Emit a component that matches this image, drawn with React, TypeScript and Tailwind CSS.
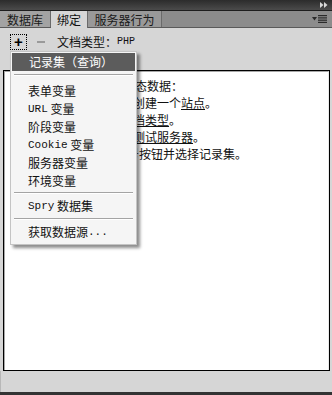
import React from "react";

const CJK = '"Noto Sans CJK SC", "Noto Sans", sans-serif';

function Mono({ children, big }: { children: React.ReactNode; big?: boolean }) {
  return (
    <span className={big ? "text-[11px] font-['Liberation_Mono',monospace]" : "text-[10px] font-['Liberation_Mono',monospace]"}>
      {children}
    </span>
  );
}

function Sep() {
  return <div className="mx-[2px] h-[2px] border-t border-[#a4a4a4] border-b border-b-white" />;
}

function Item({ children }: { children: React.ReactNode }) {
  return <div className="h-[18px] flex items-center pl-[16px] text-[12px] text-[#111] leading-none">{children}</div>;
}

export default function App() {
  return (
    <div
      className="w-[332px] h-[395px] bg-[#d6d6d6] relative overflow-hidden flex flex-col"
      style={{ fontFamily: CJK }}
    >
      {/* top dark bar */}
      <div className="h-[11px] bg-gradient-to-b from-[#2c2c2c] to-[#4b4b4b] flex items-center justify-end pr-[4px] border-b border-[#1e1e1e]">
        <svg width="8" height="6" viewBox="0 0 8 6">
          <polygon points="0,0 3.5,3 0,6" fill="#d8d8d8" />
          <polygon points="4,0 7.5,3 4,6" fill="#d8d8d8" />
        </svg>
      </div>
      {/* tab strip */}
      <div className="h-[17px] bg-[#8c8c8c] flex items-stretch border-b border-[#5a5a5a] relative">
        <div className="w-[51px] bg-[#a3a3a3] border-r border-[#6a6a6a] flex items-center justify-center text-[12px] text-[#1a1a1a] leading-none pt-[1px]">
          数据库
        </div>
        <div className="w-[37px] bg-[#d6d6d6] -mb-[1px] border-r border-[#6a6a6a] flex items-center justify-center text-[12px] text-[#111] leading-none pt-[1px]">
          绑定
        </div>
        <div className="w-[74px] bg-[#999999] border-r border-[#6a6a6a] flex items-center justify-center text-[12px] text-[#1a1a1a] leading-none pt-[1px]">
          服务器行为
        </div>
        <div className="flex-1 flex items-center justify-end pr-[5px] gap-[1px]">
          <svg width="5" height="4" viewBox="0 0 5 4">
            <polygon points="0,0 5,0 2.5,3.5" fill="#2a2a2a" />
          </svg>
          <svg width="9" height="8" viewBox="0 0 9 8">
            <rect x="0" y="0" width="9" height="1.2" fill="#2a2a2a" />
            <rect x="0" y="2.3" width="9" height="1.2" fill="#2a2a2a" />
            <rect x="0" y="4.6" width="9" height="1.2" fill="#2a2a2a" />
            <rect x="0" y="6.8" width="9" height="1.2" fill="#2a2a2a" />
          </svg>
        </div>
      </div>
      {/* toolbar */}
      <div className="h-[42px] pt-[6px] pl-[10px] flex items-start">
        <div className="w-[17px] h-[16px] border border-dotted border-black flex items-center justify-center">
          <span className="text-[15px] font-bold leading-none text-black -mt-[1px] font-['Liberation_Sans',sans-serif]">+</span>
        </div>
        <div className="ml-[10px] mt-[7px] w-[8px] h-[1.5px] bg-[#9a9a9a]" />
        <div className="ml-[12px] h-[16px] flex items-center text-[12px] text-[#111] leading-none">
          文档类型：<Mono>PHP</Mono>
        </div>
      </div>
      {/* content box */}
      <div className="h-[301px] ml-[3px] mr-[2px] border border-black bg-white">
        <div className="h-full border-l border-t border-[#a8a8a8] border-r border-r-[#eaeaea] pt-[5px] text-[12px] text-[#111] leading-[17px]">
          <div className="pl-[22px] whitespace-nowrap">要在此页面上使用动态数据：</div>
          <div className="pl-[80px] whitespace-nowrap">
            为此文件创建一个<span className="underline">站点</span>。
          </div>
          <div className="pl-[68px] whitespace-nowrap">
            选择一种文<span className="underline">档类型</span>。
          </div>
          <div className="pl-[68px] whitespace-nowrap">
            设置站点的<span className="underline">测试服务器</span>。
          </div>
          <div className="pl-[86px] whitespace-nowrap">单击加号按钮并选择记录集。</div>
        </div>
      </div>
      <div className="flex-1 border-l border-[#b8b8b8]" />
      <div className="h-[3px] bg-[#333333]" />

      {/* dropdown menu */}
      <div className="absolute left-[10px] top-[51px] w-[127px] bg-[#f5f5f5] border border-[#c4c4c4] p-[1px] shadow-[3px_3px_3px_rgba(0,0,0,0.45)]">
        <div className="h-[18px] bg-[#5c5c5c] flex items-center pl-[17px] text-[12px] text-white leading-none">
          记录集（查询）
        </div>
        <div className="pt-[3px] pb-[6px]">
          <Sep />
        </div>
        <Item>表单变量</Item>
        <Item>
          <Mono big>URL</Mono>&nbsp;变量
        </Item>
        <Item>阶段变量</Item>
        <Item>
          <Mono big>Cookie</Mono>&nbsp;变量
        </Item>
        <Item>服务器变量</Item>
        <Item>环境变量</Item>
        <div className="pt-[2px] pb-[3px]">
          <Sep />
        </div>
        <Item>
          <Mono big>Spry</Mono>&nbsp;数据集
        </Item>
        <div className="pt-[3px] pb-[3px]">
          <Sep />
        </div>
        <Item>
          获取数据源<Mono big>...</Mono>
        </Item>
        <div className="h-[2px]" />
      </div>
    </div>
  );
}
